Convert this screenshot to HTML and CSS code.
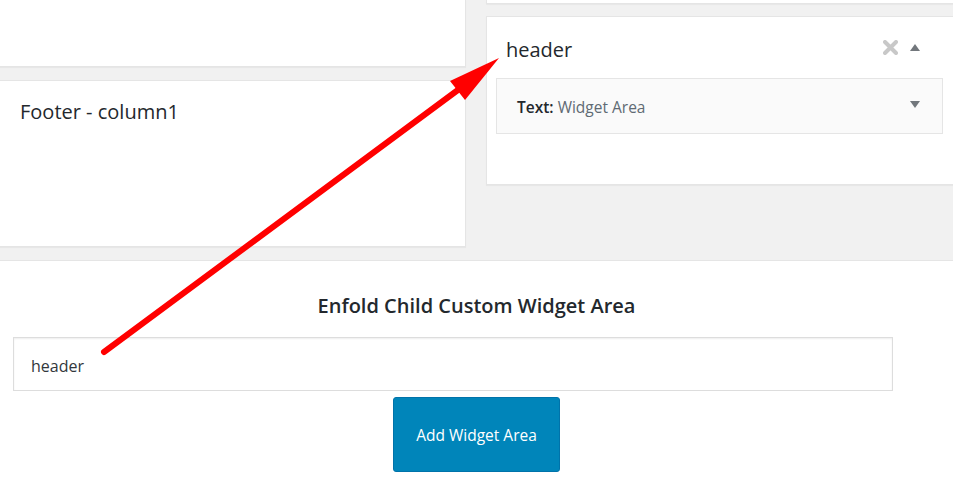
FILE: index.html
```html
<!DOCTYPE html>
<html lang="en">
<head>
  <meta charset="UTF-8" />
  <meta name="viewport" content="width=device-width, initial-scale=1.0" />
  <title>Widgets</title>
  <link rel="stylesheet" href="styles.css">
</head>
<body>
  <div class="sidebars">
    <div class="col col-left">
      <div class="sidebar sidebar-stub"></div>
      <div class="sidebar sidebar-footer">
        <h3 class="sidebar-title">Footer - column1</h3>
      </div>
    </div>
    <div class="col col-right">
      <div class="sidebar sidebar-stub-small"></div>
      <div class="sidebar sidebar-header">
        <div class="sidebar-head">
          <h3 class="sidebar-title">header</h3>
          <div class="sidebar-icons">
            <svg class="icon-x" width="15" height="15" viewBox="0 0 15 15">
              <path d="M2 2 L13 13 M13 2 L2 13" stroke="#c8c8c8" stroke-width="4" stroke-linecap="round" fill="none"/>
            </svg>
            <svg class="icon-up" width="10" height="7" viewBox="0 0 10 7">
              <polygon points="5,0 10,7 0,7" fill="#72777c"/>
            </svg>
          </div>
        </div>
        <div class="widget">
          <span class="widget-title"><strong>Text:</strong> <span class="widget-name">Widget Area</span></span>
          <svg class="icon-down" width="10" height="7" viewBox="0 0 10 7">
            <polygon points="0,0 10,0 5,7" fill="#72777c"/>
          </svg>
        </div>
      </div>
    </div>
  </div>

  <div class="new-area">
    <h2 class="new-area-title">Enfold Child Custom Widget Area</h2>
    <input class="new-area-input" type="text" value="header" />
    <div class="new-area-actions">
      <button class="add-btn">Add Widget Area</button>
    </div>
  </div>

  <!-- red annotation arrow drawn over the screenshot -->
  <svg class="annotation" width="953" height="487" viewBox="0 0 953 487">
    <line x1="104" y1="352" x2="466" y2="84" stroke="#ff0000" stroke-width="6" stroke-linecap="round"/>
    <polygon points="499,58 450,81 465,100" fill="#ff0000"/>
  </svg>
</body>
</html>
```

FILE: styles.css
```css
body {
  margin: 0;
  padding: 0;
  font-family: "Open Sans", "Noto Sans", Arial, sans-serif;
  color: #23282d;
  background-color: #fff;
  width: 953px;
  height: 487px;
  overflow: hidden;
  position: relative;
}
.sidebars {
  background-color: #f1f1f1;
  height: 260px;
  border-bottom: 1px solid #e5e5e5;
  display: flex;
  gap: 20px;
  overflow: hidden;
}
.col-left {
  width: 467px;
  margin-left: -1px;
  flex-shrink: 0;
}
.col-right {
  flex: 1;
  margin-right: -40px;
}
.sidebar {
  background-color: #fff;
  border: 1px solid #e5e5e5;
  box-shadow: 0 1px 1px rgba(0, 0, 0, 0.04);
}
.sidebar-stub {
  border-top: none;
  height: 66px;
  margin-bottom: 13px;
}
.sidebar-footer {
  height: 165px;
}
.sidebar-footer .sidebar-title {
  padding: 17px 20px 0 20px;
}
.sidebar-stub-small {
  border-top: none;
  height: 3px;
  margin-bottom: 12px;
}
.sidebar-header {
  height: 167px;
}
.sidebar-title {
  margin: 0;
  font-size: 20px;
  font-weight: 400;
  line-height: 27px;
}
.sidebar-head {
  width: 447px;
  margin-left: 9px;
  display: flex;
  justify-content: space-between;
  align-items: center;
  padding-top: 19px;
  box-sizing: border-box;
}
.sidebar-head .sidebar-title {
  padding-left: 10px;
}
.sidebar-icons {
  display: flex;
  align-items: center;
  gap: 12px;
  padding-right: 23px;
  margin-top: -4px;
}
.icon-up {
  margin-top: -1px;
}
.widget {
  width: 447px;
  height: 56px;
  margin-left: 9px;
  margin-top: 15px;
  box-sizing: border-box;
  background-color: #fafafa;
  border: 1px solid #e5e5e5;
  padding: 0 22px 0 20px;
  display: flex;
  justify-content: space-between;
  align-items: center;
  font-size: 15.5px;
}
.widget-title {
  margin-top: 2px;
}
.widget-title strong {
  font-weight: 600;
  color: #23282d;
}
.widget-name {
  color: #606a73;
}
.icon-down {
  margin-top: -3px;
}
.new-area {
  padding-top: 31px;
}
.new-area-title {
  margin: 0 0 18px 0;
  text-align: center;
  font-size: 20px;
  font-weight: 600;
  line-height: 27px;
  color: #23282d;
}
.new-area-input {
  display: block;
  margin-left: 13px;
  width: 880px;
  height: 54px;
  box-sizing: border-box;
  border: 1px solid #ddd;
  box-shadow: inset 0 1px 2px rgba(0, 0, 0, 0.07);
  padding: 4px 17px 0 17px;
  font-family: "Open Sans", "Noto Sans", Arial, sans-serif;
  font-size: 16px;
  color: #32373c;
  outline: none;
}
.new-area-actions {
  display: flex;
  justify-content: center;
  margin-top: 6px;
}
.add-btn {
  width: 167px;
  height: 75px;
  background-color: #0085ba;
  border: 1px solid #0073aa;
  border-radius: 3px;
  color: #fff;
  font-family: "Open Sans", "Noto Sans", Arial, sans-serif;
  font-size: 15.5px;
  cursor: pointer;
}
.annotation {
  position: absolute;
  left: 0;
  top: 0;
  pointer-events: none;
}
```
